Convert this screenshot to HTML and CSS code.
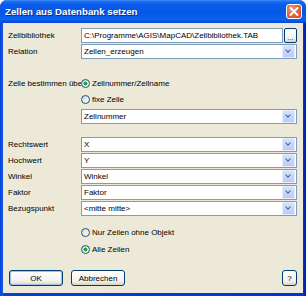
FILE: index.html
```html
<!DOCTYPE html>
<html>
  <head>
    <meta charset="UTF-8">
    <title>Zellen aus Datenbank setzen</title>
    <link rel="stylesheet" href="styles.css">
  </head>
  <body>
    <div class="window">
      <div class="titlebar">
        <span class="title">Zellen aus Datenbank setzen</span>
        <span class="close">
          <svg width="10" height="9" viewBox="0 0 10 9"><path d="M1.5 1 L8.5 8 M8.5 1 L1.5 8" stroke="#fff" stroke-width="1.8" stroke-linecap="square"/></svg>
        </span>
      </div>

      <div class="client">
        <div class="row first">
          <span class="label">Zellbibliothek</span>
          <span class="field">C:\Programme\AGIS\MapCAD\Zellbibliothek.TAB</span>
          <span class="browse">...</span>
        </div>

        <div class="row">
          <span class="label">Relation</span>
          <span class="field combo">Zellen_erzeugen<span class="arrow"></span></span>
        </div>

        <div class="row gap-radio">
          <span class="label">Zelle bestimmen über</span>
          <span class="radio checked">Zellnummer/Zellname</span>
        </div>

        <div class="row indent">
          <span class="radio">fixe Zelle</span>
        </div>

        <div class="row indent gap-2">
          <span class="field combo">Zellnummer<span class="arrow"></span></span>
        </div>

        <div class="row gap-13">
          <span class="label">Rechtswert</span>
          <span class="field combo">X<span class="arrow"></span></span>
        </div>
        <div class="row">
          <span class="label">Hochwert</span>
          <span class="field combo">Y<span class="arrow"></span></span>
        </div>
        <div class="row">
          <span class="label">Winkel</span>
          <span class="field combo">Winkel<span class="arrow"></span></span>
        </div>
        <div class="row">
          <span class="label">Faktor</span>
          <span class="field combo">Faktor<span class="arrow"></span></span>
        </div>
        <div class="row">
          <span class="label">Bezugspunkt</span>
          <span class="field combo">&lt;mitte mitte&gt;<span class="arrow"></span></span>
        </div>

        <div class="row indent gap-9">
          <span class="radio">Nur Zeilen ohne Objekt</span>
        </div>
        <div class="row indent gap-2">
          <span class="radio checked">Alle Zeilen</span>
        </div>

        <div class="footer">
          <button class="btn default">OK</button>
          <button class="btn">Abbrechen</button>
          <button class="btn help">?</button>
        </div>
      </div>
    </div>
  </body>
</html>
```

FILE: styles.css
```css
body {
  margin: 0;
  background: #ffffff;
  font-family: "Liberation Sans", Arial, sans-serif;
  font-size: 8px;
  color: #000000;
}

.window {
  width: 306px;
  height: 296px;
  display: flex;
  flex-direction: column;
  background: linear-gradient(90deg, #0843D8 0, #1658E4 3px, #0840D0 3px, #0831D9 303px, #001EA0 100%);
  border-radius: 7px 7px 0 0;
  overflow: hidden;
}

.titlebar {
  height: 23px;
  flex: none;
  display: flex;
  align-items: center;
  justify-content: space-between;
  padding: 0 4px 0 5px;
  background: linear-gradient(#3A8CF8 0%, #1C6AF0 8%, #0A5AE8 20%, #0558E6 55%, #0A62EE 85%, #0448D8 100%);
}

.title {
  color: #ffffff;
  font-size: 9.7px;
  font-weight: bold;
  text-shadow: 1px 1px #0C2A95;
}

.close {
  width: 16px;
  height: 15px;
  box-sizing: border-box;
  border: 1px solid #ffffff;
  border-radius: 3px;
  background: radial-gradient(circle at 35% 30%, #F09A80 0%, #E26A48 45%, #C8451F 100%);
  display: flex;
  align-items: center;
  justify-content: center;
}

.client {
  flex: 1;
  margin: 0 3px 3px;
  padding: 5px 6px 0 5px;
  background: #ECE9D8;
  display: flex;
  flex-direction: column;
}

.row {
  display: flex;
  align-items: center;
  height: 15px;
  margin-top: 1px;
  flex: none;
}

.row.first { margin-top: 0; }
.row.gap-radio { margin-top: 17px; }
.row.gap-2 { margin-top: 2px; }
.row.gap-9 { margin-top: 9px; }
.row.gap-13 { margin-top: 13px; }

.row.indent {
  padding-left: 73px;
}

.label {
  width: 73px;
  flex: none;
  white-space: nowrap;
  overflow: hidden;
}

.field {
  flex: 1;
  height: 15px;
  box-sizing: border-box;
  border: 1px solid #7F9DB9;
  background: #ffffff;
  display: flex;
  align-items: center;
  padding-left: 2px;
  white-space: nowrap;
  overflow: hidden;
}

.combo {
  padding-right: 1px;
}

.arrow {
  margin-left: auto;
  width: 13px;
  height: 13px;
  box-sizing: border-box;
  border: 1px solid #E3EBFE;
  border-radius: 1px;
  background: linear-gradient(#D4E1FE, #B9CCFA);
  position: relative;
}

.arrow::after {
  content: "";
  position: absolute;
  left: 3px;
  top: 2px;
  width: 3px;
  height: 3px;
  border-right: 1.5px solid #4D6185;
  border-bottom: 1.5px solid #4D6185;
  transform: rotate(45deg);
}

.browse {
  width: 13px;
  height: 15px;
  margin-left: 1px;
  box-sizing: border-box;
  border: 1px solid #003C74;
  border-radius: 2px;
  background: linear-gradient(#FFFFFF, #F0F0EA 75%, #D8D2C6);
  display: flex;
  align-items: flex-end;
  justify-content: center;
  line-height: 9px;
  color: #333333;
}

.radio {
  display: flex;
  align-items: center;
  white-space: nowrap;
}

.radio::before {
  content: "";
  width: 9px;
  height: 9px;
  margin-right: 2px;
  box-sizing: border-box;
  border: 1px solid #1C5180;
  border-radius: 50%;
  background: linear-gradient(135deg, #D6D4CC, #FFFFFF);
}

.radio.checked::before {
  background: radial-gradient(circle, #2FB12F 0, #1F9A1F 1.8px, transparent 2.2px), linear-gradient(135deg, #D6D4CC, #FFFFFF);
}

.footer {
  display: flex;
  align-items: center;
  margin-top: 13px;
  padding-left: 1px;
}

.btn {
  height: 16px;
  width: 54px;
  margin: 0 8px 0 0;
  padding: 0;
  box-sizing: border-box;
  border: 1px solid #003C74;
  border-radius: 3px;
  background: linear-gradient(#FFFFFF, #F3F3EE 70%, #D9D3C8);
  font-family: inherit;
  font-size: 8px;
  color: #000000;
}

.btn.default {
  box-shadow: inset 0 0 0 1px #A6BCEB;
}

.btn.help {
  width: 15px;
  margin: 0 0 0 auto;
}
```
